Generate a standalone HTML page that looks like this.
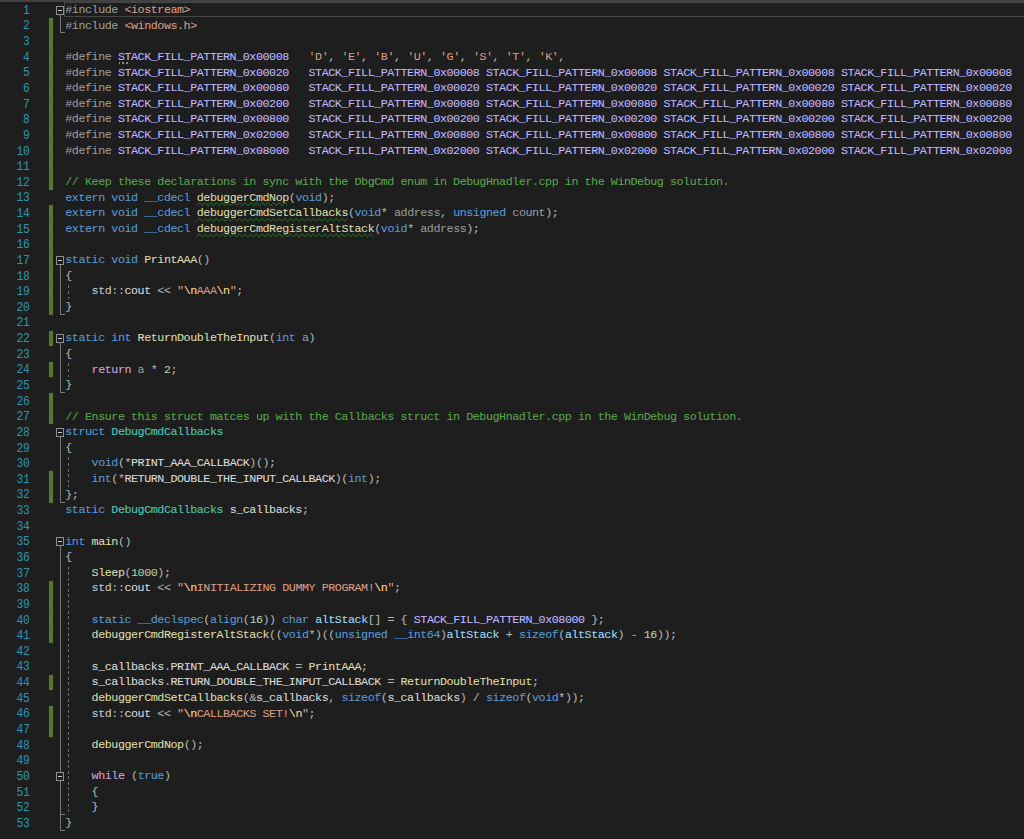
<!DOCTYPE html>
<html><head><meta charset="utf-8"><style>
html,body{margin:0;padding:0;background:#1e1e1e;width:1024px;height:839px;overflow:hidden;position:relative}
body{font-family:"Liberation Mono",monospace;font-size:11.700px;}
.top{position:absolute;left:0;top:0;width:1024px;height:2px;background:#414145}
.cur{position:absolute;left:64.2px;top:2.2px;width:980px;height:15px;border:1px solid #464646;box-sizing:border-box}
.ln{position:absolute;left:0;width:29.6px;font-size:11.3px;letter-spacing:-0.2px;margin-top:0.8px;transform:scaleY(1.1);transform-origin:0 11px;text-align:right;color:#2b91af;line-height:15.635px;height:15.635px;white-space:pre}
.cl{position:absolute;left:65.300px;line-height:15.635px;height:15.635px;white-space:pre;color:#dcdcdc;letter-spacing:-0.4411px}
.cl b{font-weight:normal}
.cl,.ln{-webkit-text-stroke:0.08px currentColor}
.cl i{font-style:normal;color:#b4b4b4}
.pp{color:#9b9b9b}.s{color:#d69d85}.e{color:#ffd68f}.m{color:#beb7ff}.c{color:#57a64a}.k{color:#569cd6}
.ck{color:#d8a0df}.f{color:#dcdcaa}.t{color:#4ec9b0}.pa{color:#9a9a9a}.n{color:#b5cea8}.g{color:#dadada}
.lv{color:#9cdcfe}.ns{color:#c8c8c8}
.gb{position:absolute;left:49px;width:4px;background:#597632;box-shadow:0 0 0.8px #597632}
.gsep{position:absolute;left:49px;width:4px;height:1px;background:#52702e}
.box{position:absolute;left:56px;width:8px;height:9px;box-sizing:border-box;border:1px solid #8e8e8e;background:#1e1e1e}
.box:after{content:"";position:absolute;left:1px;top:3px;width:4px;height:1px;background:#c8c8c8}
.vl{position:absolute;left:59.6px;width:1px;background:#747474;box-shadow:0 0 0.6px #6a6a6a}
.hl{position:absolute;left:59.6px;width:5px;height:1px;background:#7a7a7a}
.ig{position:absolute;left:68px;width:1px;background:repeating-linear-gradient(to bottom,transparent 0,transparent 1.5px,#686868 1.5px,#686868 4.5px,transparent 4.5px,transparent 5.516px)}
</style></head><body>
<div class="top"></div>
<div class="cur"></div>
<div class="gb" style="top:17.835px;height:171.985px"></div>
<div class="gsep" style="top:33.470px"></div>
<div class="gsep" style="top:49.105px"></div>
<div class="gsep" style="top:64.740px"></div>
<div class="gsep" style="top:80.375px"></div>
<div class="gsep" style="top:96.010px"></div>
<div class="gsep" style="top:111.645px"></div>
<div class="gsep" style="top:127.280px"></div>
<div class="gsep" style="top:142.915px"></div>
<div class="gsep" style="top:158.550px"></div>
<div class="gsep" style="top:174.185px"></div>
<div class="gb" style="top:205.455px;height:109.445px"></div>
<div class="gsep" style="top:221.090px"></div>
<div class="gsep" style="top:236.725px"></div>
<div class="gsep" style="top:252.360px"></div>
<div class="gsep" style="top:267.995px"></div>
<div class="gsep" style="top:283.630px"></div>
<div class="gsep" style="top:299.265px"></div>
<div class="gb" style="top:330.535px;height:15.635px"></div>
<div class="gb" style="top:361.805px;height:15.635px"></div>
<div class="gb" style="top:393.075px;height:31.270px"></div>
<div class="gsep" style="top:408.710px"></div>
<div class="gb" style="top:471.250px;height:31.270px"></div>
<div class="gsep" style="top:486.885px"></div>
<div class="gb" style="top:580.695px;height:62.540px"></div>
<div class="gsep" style="top:596.330px"></div>
<div class="gsep" style="top:611.965px"></div>
<div class="gsep" style="top:627.600px"></div>
<div class="gb" style="top:674.505px;height:15.635px"></div>
<div class="gb" style="top:705.775px;height:31.270px"></div>
<div class="gsep" style="top:721.410px"></div>
<div class="box" style="top:5.518px"></div>
<div class="vl" style="top:14.518px;height:18.953px"></div>
<div class="hl" style="top:32.470px"></div>
<div class="box" style="top:255.678px"></div>
<div class="vl" style="top:264.678px;height:50.222px"></div>
<div class="hl" style="top:313.900px"></div>
<div class="box" style="top:333.852px"></div>
<div class="vl" style="top:342.852px;height:50.223px"></div>
<div class="hl" style="top:392.075px"></div>
<div class="box" style="top:427.662px"></div>
<div class="vl" style="top:436.662px;height:65.858px"></div>
<div class="hl" style="top:501.520px"></div>
<div class="box" style="top:537.108px"></div>
<div class="vl" style="top:546.108px;height:284.747px"></div>
<div class="hl" style="top:829.855px"></div>
<div class="box" style="top:771.633px"></div>
<div class="hl" style="top:814.220px"></div>
<div class="ig" style="top:283.630px;height:15.635px"></div>
<div class="ig" style="top:361.805px;height:15.635px"></div>
<div class="ig" style="top:455.615px;height:31.270px"></div>
<div class="ig" style="top:565.060px;height:250.160px"></div>
<div class="ln" style="top:3.000px">1</div>
<div class="cl" style="top:3.000px"><b class="pp">#include</b> <b class="s">&lt;iostream&gt;</b></div>
<div class="ln" style="top:18.635px">2</div>
<div class="cl" style="top:18.635px"><b class="pp">#include</b> <b class="s">&lt;windows.h&gt;</b></div>
<div class="ln" style="top:34.270px">3</div>
<div class="cl" style="top:34.270px"></div>
<div class="ln" style="top:49.905px">4</div>
<div class="cl" style="top:49.905px"><b class="pp">#define</b> <b class="m">STACK_FILL_PATTERN_0x00008</b>   <b class="s">&#x27;D&#x27;</b><i>, </i><b class="s">&#x27;E&#x27;</b><i>, </i><b class="s">&#x27;B&#x27;</b><i>, </i><b class="s">&#x27;U&#x27;</b><i>, </i><b class="s">&#x27;G&#x27;</b><i>, </i><b class="s">&#x27;S&#x27;</b><i>, </i><b class="s">&#x27;T&#x27;</b><i>, </i><b class="s">&#x27;K&#x27;</b><i>,</i></div>
<div class="ln" style="top:65.540px">5</div>
<div class="cl" style="top:65.540px"><b class="pp">#define</b> <b class="m">STACK_FILL_PATTERN_0x00020</b>   <b class="m">STACK_FILL_PATTERN_0x00008</b> <b class="m">STACK_FILL_PATTERN_0x00008</b> <b class="m">STACK_FILL_PATTERN_0x00008</b> <b class="m">STACK_FILL_PATTERN_0x00008</b></div>
<div class="ln" style="top:81.175px">6</div>
<div class="cl" style="top:81.175px"><b class="pp">#define</b> <b class="m">STACK_FILL_PATTERN_0x00080</b>   <b class="m">STACK_FILL_PATTERN_0x00020</b> <b class="m">STACK_FILL_PATTERN_0x00020</b> <b class="m">STACK_FILL_PATTERN_0x00020</b> <b class="m">STACK_FILL_PATTERN_0x00020</b></div>
<div class="ln" style="top:96.810px">7</div>
<div class="cl" style="top:96.810px"><b class="pp">#define</b> <b class="m">STACK_FILL_PATTERN_0x00200</b>   <b class="m">STACK_FILL_PATTERN_0x00080</b> <b class="m">STACK_FILL_PATTERN_0x00080</b> <b class="m">STACK_FILL_PATTERN_0x00080</b> <b class="m">STACK_FILL_PATTERN_0x00080</b></div>
<div class="ln" style="top:112.445px">8</div>
<div class="cl" style="top:112.445px"><b class="pp">#define</b> <b class="m">STACK_FILL_PATTERN_0x00800</b>   <b class="m">STACK_FILL_PATTERN_0x00200</b> <b class="m">STACK_FILL_PATTERN_0x00200</b> <b class="m">STACK_FILL_PATTERN_0x00200</b> <b class="m">STACK_FILL_PATTERN_0x00200</b></div>
<div class="ln" style="top:128.080px">9</div>
<div class="cl" style="top:128.080px"><b class="pp">#define</b> <b class="m">STACK_FILL_PATTERN_0x02000</b>   <b class="m">STACK_FILL_PATTERN_0x00800</b> <b class="m">STACK_FILL_PATTERN_0x00800</b> <b class="m">STACK_FILL_PATTERN_0x00800</b> <b class="m">STACK_FILL_PATTERN_0x00800</b></div>
<div class="ln" style="top:143.715px">10</div>
<div class="cl" style="top:143.715px"><b class="pp">#define</b> <b class="m">STACK_FILL_PATTERN_0x08000</b>   <b class="m">STACK_FILL_PATTERN_0x02000</b> <b class="m">STACK_FILL_PATTERN_0x02000</b> <b class="m">STACK_FILL_PATTERN_0x02000</b> <b class="m">STACK_FILL_PATTERN_0x02000</b></div>
<div class="ln" style="top:159.350px">11</div>
<div class="cl" style="top:159.350px"></div>
<div class="ln" style="top:174.985px">12</div>
<div class="cl" style="top:174.985px"><b class="c">// Keep these declarations in sync with the DbgCmd enum in DebugHnadler.cpp in the WinDebug solution.</b></div>
<div class="ln" style="top:190.620px">13</div>
<div class="cl" style="top:190.620px"><b class="k">extern</b> <b class="k">void</b> <b class="k">__cdecl</b> <b class="f">debuggerCmdNop</b><i>(</i><b class="k">void</b><i>);</i></div>
<div class="ln" style="top:206.255px">14</div>
<div class="cl" style="top:206.255px"><b class="k">extern</b> <b class="k">void</b> <b class="k">__cdecl</b> <b class="f">debuggerCmdSetCallbacks</b><i>(</i><b class="k">void</b><i>* </i><b class="pa">address</b><i>, </i><b class="k">unsigned</b> <b class="pa">count</b><i>);</i></div>
<div class="ln" style="top:221.890px">15</div>
<div class="cl" style="top:221.890px"><b class="k">extern</b> <b class="k">void</b> <b class="k">__cdecl</b> <b class="f">debuggerCmdRegisterAltStack</b><i>(</i><b class="k">void</b><i>* </i><b class="pa">address</b><i>);</i></div>
<div class="ln" style="top:237.525px">16</div>
<div class="cl" style="top:237.525px"></div>
<div class="ln" style="top:253.160px">17</div>
<div class="cl" style="top:253.160px"><b class="k">static</b> <b class="k">void</b> <b class="f">PrintAAA</b><i>()</i></div>
<div class="ln" style="top:268.795px">18</div>
<div class="cl" style="top:268.795px"><i>{</i></div>
<div class="ln" style="top:284.430px">19</div>
<div class="cl" style="top:284.430px">    <b class="ns">std</b><i>::</i><b class="g">cout</b><i> &lt;&lt; </i><b class="s">&quot;</b><b class="e">\n</b><b class="s">AAA</b><b class="e">\n</b><b class="s">&quot;</b><i>;</i></div>
<div class="ln" style="top:300.065px">20</div>
<div class="cl" style="top:300.065px"><i>}</i></div>
<div class="ln" style="top:315.700px">21</div>
<div class="cl" style="top:315.700px"></div>
<div class="ln" style="top:331.335px">22</div>
<div class="cl" style="top:331.335px"><b class="k">static</b> <b class="k">int</b> <b class="f">ReturnDoubleTheInput</b><i>(</i><b class="k">int</b> <b class="pa">a</b><i>)</i></div>
<div class="ln" style="top:346.970px">23</div>
<div class="cl" style="top:346.970px"><i>{</i></div>
<div class="ln" style="top:362.605px">24</div>
<div class="cl" style="top:362.605px">    <b class="ck">return</b> <b class="pa">a</b><i> * </i><b class="n">2</b><i>;</i></div>
<div class="ln" style="top:378.240px">25</div>
<div class="cl" style="top:378.240px"><i>}</i></div>
<div class="ln" style="top:393.875px">26</div>
<div class="cl" style="top:393.875px"></div>
<div class="ln" style="top:409.510px">27</div>
<div class="cl" style="top:409.510px"><b class="c">// Ensure this struct matces up with the Callbacks struct in DebugHnadler.cpp in the WinDebug solution.</b></div>
<div class="ln" style="top:425.145px">28</div>
<div class="cl" style="top:425.145px"><b class="k">struct</b> <b class="t">DebugCmdCallbacks</b></div>
<div class="ln" style="top:440.780px">29</div>
<div class="cl" style="top:440.780px"><i>{</i></div>
<div class="ln" style="top:456.415px">30</div>
<div class="cl" style="top:456.415px">    <b class="k">void</b><i>(*</i><b class="g">PRINT_AAA_CALLBACK</b><i>)();</i></div>
<div class="ln" style="top:472.050px">31</div>
<div class="cl" style="top:472.050px">    <b class="k">int</b><i>(*</i><b class="g">RETURN_DOUBLE_THE_INPUT_CALLBACK</b><i>)(</i><b class="k">int</b><i>);</i></div>
<div class="ln" style="top:487.685px">32</div>
<div class="cl" style="top:487.685px"><i>};</i></div>
<div class="ln" style="top:503.320px">33</div>
<div class="cl" style="top:503.320px"><b class="k">static</b> <b class="t">DebugCmdCallbacks</b> <b class="g">s_callbacks</b><i>;</i></div>
<div class="ln" style="top:518.955px">34</div>
<div class="cl" style="top:518.955px"></div>
<div class="ln" style="top:534.590px">35</div>
<div class="cl" style="top:534.590px"><b class="k">int</b> <b class="f">main</b><i>()</i></div>
<div class="ln" style="top:550.225px">36</div>
<div class="cl" style="top:550.225px"><i>{</i></div>
<div class="ln" style="top:565.860px">37</div>
<div class="cl" style="top:565.860px">    <b class="f">Sleep</b><i>(</i><b class="n">1000</b><i>);</i></div>
<div class="ln" style="top:581.495px">38</div>
<div class="cl" style="top:581.495px">    <b class="ns">std</b><i>::</i><b class="g">cout</b><i> &lt;&lt; </i><b class="s">&quot;</b><b class="e">\n</b><b class="s">INITIALIZING DUMMY PROGRAM!</b><b class="e">\n</b><b class="s">&quot;</b><i>;</i></div>
<div class="ln" style="top:597.130px">39</div>
<div class="cl" style="top:597.130px"></div>
<div class="ln" style="top:612.765px">40</div>
<div class="cl" style="top:612.765px">    <b class="k">static</b> <b class="k">__declspec</b><i>(</i><b class="k">align</b><i>(</i><b class="n">16</b><i>)) </i><b class="k">char</b> <b class="lv">altStack</b><i>[] = { </i><b class="m">STACK_FILL_PATTERN_0x08000</b><i> };</i></div>
<div class="ln" style="top:628.400px">41</div>
<div class="cl" style="top:628.400px">    <b class="f">debuggerCmdRegisterAltStack</b><i>((</i><b class="k">void</b><i>*)((</i><b class="k">unsigned</b> <b class="k">__int64</b><i>)</i><b class="lv">altStack</b><i> + </i><b class="k">sizeof</b><i>(</i><b class="lv">altStack</b><i>) - </i><b class="n">16</b><i>));</i></div>
<div class="ln" style="top:644.035px">42</div>
<div class="cl" style="top:644.035px"></div>
<div class="ln" style="top:659.670px">43</div>
<div class="cl" style="top:659.670px">    <b class="g">s_callbacks</b><i>.</i><b class="g">PRINT_AAA_CALLBACK</b><i> = </i><b class="f">PrintAAA</b><i>;</i></div>
<div class="ln" style="top:675.305px">44</div>
<div class="cl" style="top:675.305px">    <b class="g">s_callbacks</b><i>.</i><b class="g">RETURN_DOUBLE_THE_INPUT_CALLBACK</b><i> = </i><b class="f">ReturnDoubleTheInput</b><i>;</i></div>
<div class="ln" style="top:690.940px">45</div>
<div class="cl" style="top:690.940px">    <b class="f">debuggerCmdSetCallbacks</b><i>(&amp;</i><b class="g">s_callbacks</b><i>, </i><b class="k">sizeof</b><i>(</i><b class="g">s_callbacks</b><i>) / </i><b class="k">sizeof</b><i>(</i><b class="k">void</b><i>*));</i></div>
<div class="ln" style="top:706.575px">46</div>
<div class="cl" style="top:706.575px">    <b class="ns">std</b><i>::</i><b class="g">cout</b><i> &lt;&lt; </i><b class="s">&quot;</b><b class="e">\n</b><b class="s">CALLBACKS SET!</b><b class="e">\n</b><b class="s">&quot;</b><i>;</i></div>
<div class="ln" style="top:722.210px">47</div>
<div class="cl" style="top:722.210px"></div>
<div class="ln" style="top:737.845px">48</div>
<div class="cl" style="top:737.845px">    <b class="f">debuggerCmdNop</b><i>();</i></div>
<div class="ln" style="top:753.480px">49</div>
<div class="cl" style="top:753.480px"></div>
<div class="ln" style="top:769.115px">50</div>
<div class="cl" style="top:769.115px">    <b class="ck">while</b><i> (</i><b class="k">true</b><i>)</i></div>
<div class="ln" style="top:784.750px">51</div>
<div class="cl" style="top:784.750px"><i>    {</i></div>
<div class="ln" style="top:800.385px">52</div>
<div class="cl" style="top:800.385px"><i>    }</i></div>
<div class="ln" style="top:816.020px">53</div>
<div class="cl" style="top:816.020px"><i>}</i></div>
<svg style="position:absolute;left:0;top:0" width="1024" height="839"><polyline points="196.60,205.52 199.45,202.72 202.30,205.52 205.15,202.72 208.00,205.52 210.85,202.72 213.70,205.52 216.55,202.72 219.40,205.52 222.25,202.72 225.10,205.52 227.95,202.72 230.80,205.52 233.65,202.72 236.50,205.52 239.35,202.72 242.20,205.52 245.05,202.72 247.90,205.52 250.75,202.72 253.60,205.52 256.45,202.72 259.30,205.52 262.15,202.72 265.00,205.52 267.85,202.72 270.70,205.52 273.55,202.72 276.40,205.52 279.25,202.72 282.10,205.52 284.95,202.72 287.80,205.52" fill="none" stroke="#247a24" stroke-width="1"/><polyline points="196.60,221.16 199.45,218.35 202.30,221.16 205.15,218.35 208.00,221.16 210.85,218.35 213.70,221.16 216.55,218.35 219.40,221.16 222.25,218.35 225.10,221.16 227.95,218.35 230.80,221.16 233.65,218.35 236.50,221.16 239.35,218.35 242.20,221.16 245.05,218.35 247.90,221.16 250.75,218.35 253.60,221.16 256.45,218.35 259.30,221.16 262.15,218.35 265.00,221.16 267.85,218.35 270.70,221.16 273.55,218.35 276.40,221.16 279.25,218.35 282.10,221.16 284.95,218.35 287.80,221.16 290.65,218.35 293.50,221.16 296.35,218.35 299.20,221.16 302.05,218.35 304.90,221.16 307.75,218.35 310.60,221.16 313.45,218.35 316.30,221.16 319.15,218.35 322.00,221.16 324.85,218.35 327.70,221.16 330.55,218.35 333.40,221.16 336.25,218.35 339.10,221.16 341.95,218.35 344.80,221.16 347.65,218.35" fill="none" stroke="#247a24" stroke-width="1"/><polyline points="196.60,236.79 199.45,233.99 202.30,236.79 205.15,233.99 208.00,236.79 210.85,233.99 213.70,236.79 216.55,233.99 219.40,236.79 222.25,233.99 225.10,236.79 227.95,233.99 230.80,236.79 233.65,233.99 236.50,236.79 239.35,233.99 242.20,236.79 245.05,233.99 247.90,236.79 250.75,233.99 253.60,236.79 256.45,233.99 259.30,236.79 262.15,233.99 265.00,236.79 267.85,233.99 270.70,236.79 273.55,233.99 276.40,236.79 279.25,233.99 282.10,236.79 284.95,233.99 287.80,236.79 290.65,233.99 293.50,236.79 296.35,233.99 299.20,236.79 302.05,233.99 304.90,236.79 307.75,233.99 310.60,236.79 313.45,233.99 316.30,236.79 319.15,233.99 322.00,236.79 324.85,233.99 327.70,236.79 330.55,233.99 333.40,236.79 336.25,233.99 339.10,236.79 341.95,233.99 344.80,236.79 347.65,233.99 350.50,236.79 353.35,233.99 356.20,236.79 359.05,233.99 361.90,236.79 364.75,233.99 367.60,236.79 370.45,233.99 373.30,236.79" fill="none" stroke="#247a24" stroke-width="1"/></svg>
<div style="position:absolute;left:118.6px;top:62.3px;width:1.5px;height:1.5px;background:#8a8a8a"></div><div style="position:absolute;left:122.3px;top:62.3px;width:1.5px;height:1.5px;background:#8a8a8a"></div><div style="position:absolute;left:126.0px;top:62.3px;width:1.5px;height:1.5px;background:#8a8a8a"></div>
</body></html>
